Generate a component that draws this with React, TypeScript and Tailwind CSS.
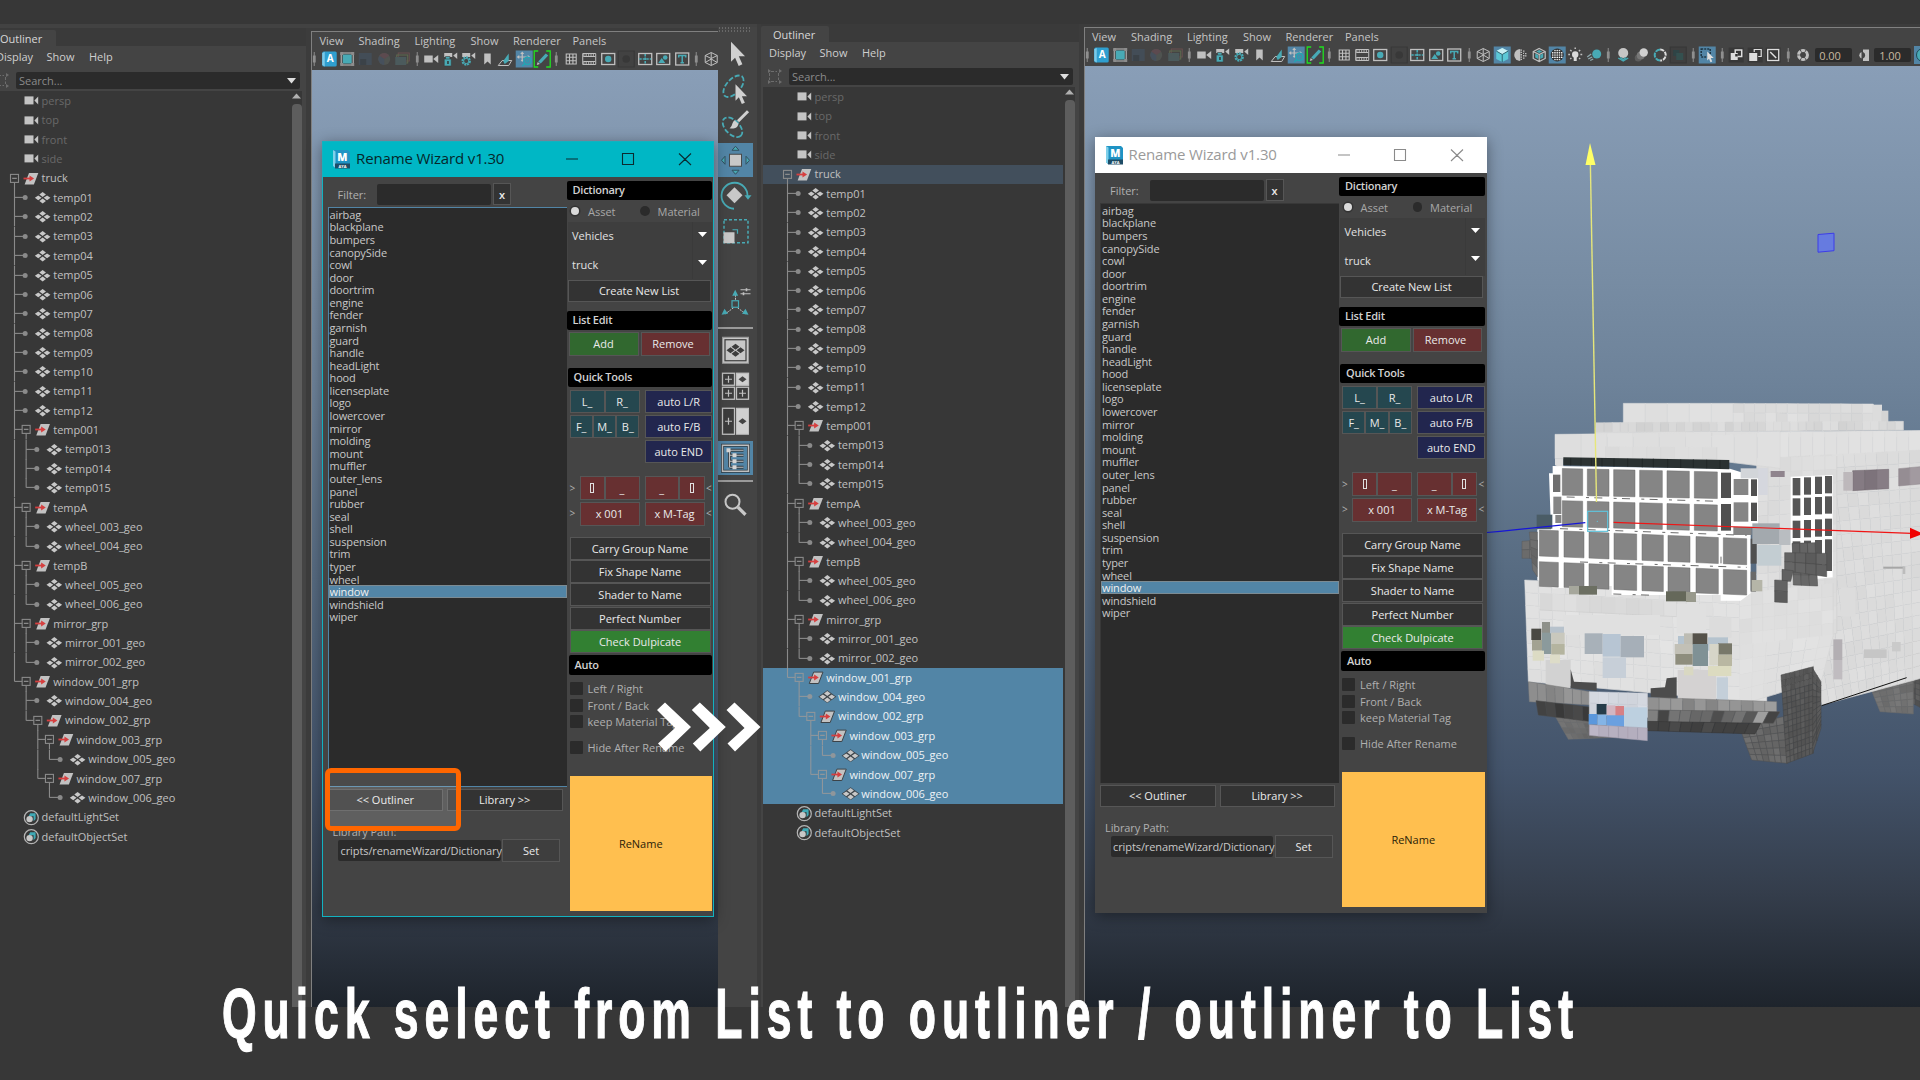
import React from "react";

/* ------------------------------------------------------------------ */
/* Outliner                                                            */
/* ------------------------------------------------------------------ */

type Kind = "cam" | "grp" | "geo" | "set";
type Row = [string, Kind, number];

const TREE: Row[] = [
  ["persp", "cam", 0],
  ["top", "cam", 0],
  ["front", "cam", 0],
  ["side", "cam", 0],
  ["truck", "grp", 0],
  ...["01", "02", "03", "04", "05", "06", "07", "08", "09", "10", "11", "12"].map(
    (n) => ["temp" + n, "geo", 1] as Row
  ),
  ["temp001", "grp", 1],
  ["temp013", "geo", 2],
  ["temp014", "geo", 2],
  ["temp015", "geo", 2],
  ["tempA", "grp", 1],
  ["wheel_003_geo", "geo", 2],
  ["wheel_004_geo", "geo", 2],
  ["tempB", "grp", 1],
  ["wheel_005_geo", "geo", 2],
  ["wheel_006_geo", "geo", 2],
  ["mirror_grp", "grp", 1],
  ["mirror_001_geo", "geo", 2],
  ["mirror_002_geo", "geo", 2],
  ["window_001_grp", "grp", 1],
  ["window_004_geo", "geo", 2],
  ["window_002_grp", "grp", 2],
  ["window_003_grp", "grp", 3],
  ["window_005_geo", "geo", 4],
  ["window_007_grp", "grp", 3],
  ["window_006_geo", "geo", 4],
  ["defaultLightSet", "set", 0],
  ["defaultObjectSet", "set", 0],
];

const STEP = 11.65;
const MID = 9.7;

/** True when a guide line of the given level goes on below row i. */
function continues(i: number, level: number) {
  for (let j = i + 1; j < TREE.length; j++) {
    if (TREE[j][2] <= level) return false;
    if (TREE[j][2] === level + 1) return true;
  }
  return false;
}

function NodeIcon({ kind, x, sel }: { kind: Kind; x: number; sel: boolean }) {
  const y = MID;
  if (kind === "cam")
    return (
      <g fill="#c4c4c4">
        <rect x={x - 6.5} y={y - 4.3} width="9" height="8" />
        <path d={`M${x + 7.2} ${y - 4.3}v8l-3.8 -4z`} />
      </g>
    );
  if (kind === "grp")
    return (
      <g>
        <path
          d={`M${x - 2} ${y - 5.6}h9.3l-4.4 11.4h-9.3z`}
          fill="#c2c2c2"
          stroke={sel ? "#3c4348" : "none"}
          strokeWidth="1"
        />
        <path d={`M${x - 7.5} ${y - 0.2}h8`} stroke="#d63f3f" strokeWidth="1.8" />
        <path d={`M${x - 1.5} ${y - 3.2}l4.6 3l-4.6 3z`} fill="#d63f3f" />
      </g>
    );
  if (kind === "geo")
    return (
      <g fill="#c8c8c8">
        {sel && <path d={`M${x - 9} ${y}l9 -6.4l9 6.4l-9 6.4z`} fill="#3c4348" />}
        <path d={`M${x} ${y - 5.6}l3.3 2.4l-3.3 2.4l-3.3 -2.4z`} />
        <path d={`M${x} ${y + 0.9}l3.3 2.4l-3.3 2.4l-3.3 -2.4z`} />
        <path d={`M${x - 4.4} ${y - 2.3}l3.4 2.4l-3.4 2.4l-3.4 -2.4z`} />
        <path d={`M${x + 4.4} ${y - 2.3}l3.4 2.4l-3.4 2.4l-3.4 -2.4z`} />
      </g>
    );
  return (
    <g>
      <circle cx={x + 0.3} cy={y} r="7" fill="none" stroke="#b4b4b4" strokeWidth="1.2" />
      <path d={`M${x - 0.8} ${y - 4.4}h5.4v5.6l-2 2.4v-5h-5z`} fill="#3fa9b5" />
      <circle cx={x - 1.4} cy={y + 1.4} r="3.2" fill="#c8c8c8" />
    </g>
  );
}

function TreeRow({ i, hot }: { i: number; hot: boolean }) {
  const [name, kind, depth] = TREE[i];
  const inSel = hot && i >= 30 && i <= 36;
  const w = 51.6 + STEP * depth;
  const line = inSel ? "#8f969b" : "#8a8a8a";
  const X = (k: number) => 24.5 + STEP * k;
  const bg = inSel ? "bg-[#5285a6]" : hot && i === 4 ? "bg-[#424f5c]" : "";
  const fg = inSel ? "text-[#eef3f6]" : kind === "cam" ? "text-[#696969]" : "text-[#c0c0c0]";
  const px = X(depth - 1);
  return (
    <div className={`flex h-[19.36px] w-[300px] shrink-0 items-center ${bg}`}>
      <svg className="shrink-0 overflow-visible" width={w} height="19.36">
        <g stroke={line} strokeWidth="1.1" fill="none">
          {Array.from({ length: Math.max(0, depth - 1) }, (_, k) =>
            continues(i, k) ? <path key={k} d={`M${X(k)} 0V19.4`} /> : null
          )}
          {depth > 0 && <path d={`M${px} 0V${continues(i, depth - 1) ? 19.4 : MID - 0.3}`} />}
          {depth > 0 && <path d={`M${px} ${MID - 0.3}H${kind === "grp" ? X(depth) - 4 : X(depth) - 2}`} />}
          {kind === "grp" && (
            <>
              <rect x={X(depth) - 4} y={MID - 4.3} width="8" height="8" />
              <path d={`M${X(depth) - 2.3} ${MID - 0.3}h4.6M${X(depth)} ${MID + 4}V19.4`} />
            </>
          )}
        </g>
        {kind === "geo" && <circle cx={X(depth) - 1} cy={MID - 0.3} r="2.5" fill={line} />}
        <NodeIcon kind={kind} x={41 + STEP * depth} sel={inSel} />
      </svg>
      <span className={`whitespace-nowrap pb-px text-[11px] leading-none ${fg}`}>{name}</span>
    </div>
  );
}

function Outliner({ hot = false }: { hot?: boolean }) {
  return (
    <div className="flex w-[318px] shrink-0 flex-col bg-[#3a3a3a]">
      <div className="flex h-[18px] items-end">
        <div className="flex h-4 w-[68px] items-center rounded-t-[2px] bg-[#444444] pl-3 text-[11px] leading-none text-[#d8d8d8]">
          Outliner
        </div>
      </div>
      <div className="flex min-h-0 flex-1 flex-col bg-[#444444]">
        <div className="flex h-[21px] items-center pb-px pl-[8px] text-[11px] leading-none text-[#cfcfcf]">
          <span className="w-[50.5px]">Display</span>
          <span className="w-[42.5px]">Show</span>
          <span>Help</span>
        </div>
        <div className="flex h-6 pl-[6px] pt-[5px]">
          <svg width="22" height="17" fill="none" stroke="#6d6d6d" strokeWidth="1">
            <path d="M4 3.5h6M4 13.5h6M2.500 5v7M11.500 5v7" strokeDasharray="3 1.500" />
            <path d="M1 1l3 2l-3 2zM1 12l3 2l-3 2zM12 1l3 2l-3 2zM12 12l3 2l-3 2z" fill="#6d6d6d" stroke="none" />
          </svg>
          <div className="flex h-[17px] w-[284px] items-center justify-between rounded-[2px] bg-[#2b2b2b] pl-[3px] pr-1 text-[11px] leading-none text-[#8a8a8a]">
            <span>Search...</span>
            <svg width="9" height="6">
              <path d="M0 0h9l-4.500 5.400z" fill="#dedede" />
            </svg>
          </div>
        </div>
        <div className="flex min-h-0 flex-1 pl-[2px]">
          <div className="flex w-[301px] flex-col bg-[#373737] pt-[0.3px]">
            {TREE.map((_, i) => (
              <TreeRow key={i} i={i} hot={hot} />
            ))}
          </div>
          <div className="flex w-[11px] flex-col items-center bg-[#373737] pt-[2px]">
            <svg width="9" height="6">
              <path d="M0 5.500h9l-4.500 -5z" fill="#b0b0b0" />
            </svg>
            <div className="mt-[5px] w-[10px] flex-1 rounded-t-[4px] bg-[#5d5d5d]" />
          </div>
        </div>
      </div>
    </div>
  );
}

/* ------------------------------------------------------------------ */
/* Viewport tool bar                                                   */
/* ------------------------------------------------------------------ */

const T = "#48aab5";
const G = "#c0c0c0";

const CUBE = "M9 2.500l6 3v7l-6 3l-6 -3v-7zM3 5.500l6 3l6 -3M9 8.500v7";

const ICONS: Record<string, React.ReactNode> = {
  a: (
    <>
      <rect x="2" y="1.500" width="14.500" height="15" rx="1.500" fill="#2f9fd0" />
      <path d="M2 3v12l2.500 1.500V2z" fill="#7cc9e8" />
      <text x="10" y="12.300" fontSize="10" fontWeight="700" fill="#fff" textAnchor="middle">A</text>
    </>
  ),
  frame: (
    <>
      <rect x="4.500" y="4.500" width="9" height="9" fill={T} />
      <path d="M3 3h12v12h-12z" fill="none" stroke={G} />
      <path d="M2 2h3v3h-3zM13 2h3v3h-3zM2 13h3v3h-3zM13 13h3v3h-3z" fill="#8d8d8d" />
    </>
  ),
  dim1: (
    <>
      <rect x="2.500" y="3" width="13" height="12" fill="#434d57" />
      <rect x="4" y="9" width="6" height="6" fill="#3b4248" />
    </>
  ),
  dim2: (
    <>
      <circle cx="9" cy="9" r="6" fill="#4f5350" />
      <path d="M9 9L4 5.800A6 6 0 0 1 14 5.800z" fill="#5c4a4f" />
      <path d="M9 9l-5 -3.200A6 6 0 0 0 9 15z" fill="#46505c" />
    </>
  ),
  dim3: (
    <>
      <rect x="5" y="3" width="11" height="8" fill="none" stroke="#6a4f4f" />
      <rect x="3.500" y="5" width="11" height="8" fill="none" stroke="#5f6a4f" />
      <rect x="2" y="7" width="11" height="8" fill="#4b5a5c" />
    </>
  ),
  cam: <path d="M2 5.500h8.500v7H2zM11 9l5 -4v8z" fill={G} />,
  camlock: (
    <>
      <path d="M3 3h8v4h-8zM12 5.500l4 -3v6.500z" fill={G} />
      <path d="M3 9h7v7h-7zM4.300 9v-2.500h4.400V9" fill={T} stroke="#3a3a3a" strokeWidth=".6" />
      <rect x="6" y="11" width="1.500" height="3" fill="#333" />
    </>
  ),
  camgear: (
    <>
      <path d="M3 3h8v4h-8zM12 5.500l4 -3v6.500z" fill={G} />
      <circle cx="7" cy="11" r="3.700" fill="#444" stroke={T} strokeWidth="2" strokeDasharray="2 .8" />
      <circle cx="7" cy="11" r="2.600" fill="none" stroke={T} />
    </>
  ),
  mark: <path d="M6 3.500h6.500v11l-3.200 -3l-3.300 3z" fill={G} />,
  plane: (
    <>
      <path d="M2 15.500l4 -5h9.500l-3 5z" fill="none" stroke={G} />
      <path d="M7 11l5.500 -7.500v7.500l-4 3z" fill={T} />
    </>
  ),
  pan: (
    <>
      <rect x=".5" y=".5" width="17" height="17" fill="#5285a6" />
      <path d="M7 3.500v7M3.500 7h8" stroke={G} strokeWidth="1.200" />
      <path d="M7 1.500l2 2.500h-4zM1.500 7l2.500 -2v4zM12.500 5l2.500 2l-2.500 1zM5.500 10h3l-1.500 2z" fill={G} />
      <circle cx="12.300" cy="10.800" r="3.600" fill="#5285a6" stroke="#23a5b3" strokeWidth="1.500" />
      <circle cx="12.300" cy="10.800" r="1.200" fill="none" stroke="#23a5b3" />
      <path d="M9.800 13.500l-2.800 2.500" stroke="#23a5b3" strokeWidth="1.600" />
    </>
  ),
  pen: (
    <>
      <path d="M5 1H1v16h4M13 1h4v16h-4" fill="none" stroke="#1fe01f" strokeWidth="1.300" />
      <path d="M12.500 3.500l2.500 2l-7.500 8l-2.500 -2z" fill={T} />
      <path d="M4.500 12l2.300 2l-3.300 1z" fill={G} />
    </>
  ),
  grid: <path d="M4 4h10v10H4zM7.300 4v10M10.700 4v10M4 7.300h10M4 10.700h10" fill="none" stroke={G} strokeWidth="1.100" />,
  film: (
    <>
      <path d="M2.500 3.500h13v11h-13zM3 6.500h12M3 11.500h12" fill="none" stroke={G} />
      <path d="M3 5h12M3 13h12" stroke={G} strokeWidth="1.600" strokeDasharray="1.200 1.200" />
    </>
  ),
  gate: (
    <>
      <rect x="2.500" y="3.500" width="13" height="11" fill="none" stroke={G} strokeWidth="1.300" />
      <circle cx="9" cy="9" r="3.200" fill={T} />
    </>
  ),
  gatedim: (
    <>
      <rect x="1" y="1" width="16" height="16" fill="#424242" stroke="#383838" />
      <circle cx="9" cy="9" r="3.800" fill="#383838" />
    </>
  ),
  cross: (
    <>
      <rect x="2.500" y="3.500" width="13" height="11" fill="none" stroke={G} strokeWidth="1.300" />
      <path d="M9 4v10M3 9h12" stroke={T} strokeWidth="1.600" strokeDasharray="2.500 1" />
    </>
  ),
  image: (
    <>
      <rect x="2.500" y="3.500" width="13" height="11" fill="none" stroke={G} strokeWidth="1.300" />
      <path d="M4 13l3.500 -5l3.500 5z" fill={T} />
      <circle cx="11" cy="7.500" r="2.300" fill={T} />
    </>
  ),
  text: (
    <>
      <rect x="2.500" y="3" width="13" height="12" fill="none" stroke={G} strokeWidth="1.300" />
      <path d="M5.500 7.500v-2h7v2M9 5.500v7M7.300 12.700h3.400" fill="none" stroke={T} strokeWidth="1.500" />
    </>
  ),
  cube: <path d={CUBE + "M3 12.500l6 -3.500l6 3.500M9 2.500v6"} fill="none" stroke={G} strokeWidth="1" />,
  cubefill: (
    <>
      <rect x=".5" y=".5" width="17" height="17" fill="#5285a6" />
      <path d="M9 2l6 3v8l-6 3l-6 -3V5z" fill="#5cc8d6" />
      <path d="M3 5l6 -3l6 3l-6 3.500z" fill="#c9eef2" />
      <path d="M3 5l6 3.500l6 -3.500M9 8.500V16" fill="none" stroke="#2f6673" />
    </>
  ),
  half: (
    <>
      <path d="M9 3a6 6 0 0 0 0 12z" fill={G} />
      <path d="M10 3.500v11M12.500 4.500v9M14.500 7v4" stroke={G} strokeWidth="1.500" strokeDasharray="1.300 1" />
    </>
  ),
  cubein: (
    <>
      <path d={CUBE} fill="none" stroke={G} strokeWidth="1.200" />
      <path d="M5 7.500l3 1.500v4l-3 -1.500zM10 9l3 -1.500v4l-3 1.500zM6 5.500l3 -1.500l3 1.500l-3 1.500z" fill={T} />
    </>
  ),
  dots: (
    <>
      <rect x=".5" y=".5" width="17" height="17" fill="#5285a6" />
      <circle cx="9" cy="9" r="6.500" fill="#2e2e2e" />
      {[4.500, 6.750, 9, 11.250, 13.500].map((y, j) =>
        [4.500, 6.750, 9, 11.250, 13.500].map((x) =>
          Math.hypot(x - 9, y - 9) < 6 ? <circle key={`${x}${y}`} cx={x} cy={y} r=".85" fill={j % 2 ? "#ffffff" : "#dedede"} /> : null
        )
      )}
    </>
  ),
  bulb: (
    <>
      <circle cx="9" cy="8.500" r="3.200" fill="#dcdcdc" />
      <path d="M7.500 11h3v4h-3z" fill="#dcdcdc" />
      <path d="M9 1.500v1.500M2 8.500h1.800M14.200 8.500H16M4 4l1.400 1.200M14 4l-1.400 1.200M4 13l1.200 -1M14 13l-1.200 -1" stroke={G} strokeWidth="1.500" />
    </>
  ),
  comet: (
    <>
      <circle cx="11.500" cy="8" r="4.500" fill={T} />
      <path d="M2 11l4 -3M3 13l4 -2M5 14.500l3 -1.500" stroke="#8fa9ad" strokeWidth="1.300" />
    </>
  ),
  ball: (
    <>
      <circle cx="9" cy="7" r="5" fill="#c6c6c6" />
      <path d="M4 12l5 3l5 -3M6 11.500l3 2l3 -2" fill="none" stroke={T} strokeWidth="1.300" />
    </>
  ),
  motion: (
    <>
      <circle cx="6" cy="12" r="3.500" fill="#5d5d5d" />
      <circle cx="8.500" cy="9.500" r="4" fill="#777" />
      <circle cx="11.500" cy="6.500" r="4.200" fill="#cfcfcf" />
    </>
  ),
  ring: (
    <>
      <path d="M9 3.500a5.500 5.500 0 0 0 0 11" fill="none" stroke={T} strokeWidth="2" strokeDasharray="5 1" />
      <path d="M9 3.500a5.500 5.500 0 0 1 0 11" fill="none" stroke="#ddd" strokeWidth="2" strokeDasharray="4 1" />
    </>
  ),
  sqdim: (
    <>
      <rect x="1" y="1" width="16" height="16" fill="#3f3f3f" stroke="#373737" />
      <rect x="4" y="4" width="6" height="6" fill="#2f4446" />
      <rect x="7" y="7" width="7" height="7" fill="#34504f" />
    </>
  ),
  pick: (
    <>
      <rect x=".5" y=".5" width="17" height="17" fill="#5285a6" />
      <rect x="3" y="3" width="9" height="8" fill="none" stroke="#1f3644" strokeWidth="1.500" strokeDasharray="2 1" />
      <path d="M9 5.500l6.500 6.500h-3l1.500 3.500l-1.700 .7l-1.500 -3.500l-1.800 1.800z" fill="#dedede" />
    </>
  ),
  ov1: (
    <>
      <rect x="1.500" y="1.500" width="15" height="15" fill="#383838" />
      <rect x="3.500" y="7" width="7" height="7" fill="#dedede" />
      <path d="M8 4h6.500v6.500H8z" fill="none" stroke="#dedede" strokeWidth="1.500" />
      <rect x="8" y="8" width="2.500" height="2.500" fill="#333" />
    </>
  ),
  ov2: (
    <>
      <rect x="1.500" y="1.500" width="15" height="15" fill="#383838" />
      <rect x="3" y="7" width="8" height="8" fill="#dedede" />
      <path d="M8 6V3.500h7v7h-3" fill="none" stroke="#dedede" strokeWidth="1.200" />
    </>
  ),
  ov3: (
    <>
      <rect x="1.500" y="1.500" width="15" height="15" fill="#383838" />
      <rect x="3.500" y="3.500" width="11" height="11" fill="none" stroke="#dedede" strokeWidth="1.300" />
      <path d="M6 6l6 6" stroke="#dedede" strokeWidth="1.500" />
    </>
  ),
};

function Icon({ n }: { n: string }) {
  return (
    <svg className="w-[18.45px] shrink-0" height="18" viewBox="0 0 18 18">
      {ICONS[n]}
    </svg>
  );
}

function Sep() {
  return (
    <svg className="w-[10.6px] shrink-0" height="18" viewBox="0 0 10.600 18">
      <path d="M5.300 2v14M5.300 6v6" stroke="#7d7d7d" strokeWidth="1.300" />
      <path d="M5.300 5.500v7" stroke="#8f8f8f" strokeWidth="2.800" />
    </svg>
  );
}

function ViewBar({ wide }: { wide: boolean }) {
  const render = (list: string[]) =>
    list.map((n, i) => (n === "|" ? <Sep key={i} /> : <Icon key={i} n={n} />));
  const base = ["|", "a", "frame", "dim1", "dim2", "dim3", "|", "cam", "camlock", "camgear", "mark", "plane", "pan", "pen", "|", "grid", "film", "gate", "gatedim", "cross", "image", "text", "|", "cube"];
  const more = ["cubefill", "half", "cubein", "dots", "bulb", "comet", "|", "ball", "motion", "ring", "sqdim", "|", "pick", "|", "ov1", "ov2", "ov3", "|"];
  return (
    <div className="flex h-[38px] shrink-0 flex-col bg-[#444444] text-[11px] leading-none text-[#c6c6c6]">
      <div className="flex h-[18px] items-center pb-px pl-[7.5px]">
        <span className="w-[39px]">View</span>
        <span className="w-[56px]">Shading</span>
        <span className="w-[56px]">Lighting</span>
        <span className="w-[42.5px]">Show</span>
        <span className="w-[59.500px]">Renderer</span>
        <span>Panels</span>
      </div>
      <div className="-ml-[3px] flex h-[18px] items-center">
        {render(base)}
        {wide && (
          <>
            {render(more)}
            <svg className="ml-[2px] shrink-0" width="16" height="18" viewBox="0 0 16 18">
              <circle cx="8" cy="9" r="4.500" fill="none" stroke={G} strokeWidth="3" strokeDasharray="4 .7" />
            </svg>
            <div className="ml-[4px] flex h-[14px] w-[36.500px] shrink-0 items-center rounded-[2px] bg-[#2b2b2b] pl-1 text-[#c8b9a0]">0.00</div>
            <svg className="ml-[5px] shrink-0" width="14" height="18" viewBox="0 0 14 18">
              <path d="M6 3.500h6v11.500h-6v-2.500a3.500 3.500 0 0 0 0 -6.500z" fill={G} />
              <path d="M4.500 6a3.500 3.500 0 0 0 0 6.500z" fill={G} />
            </svg>
            <div className="ml-[3.500px] flex h-[14px] w-[36.500px] shrink-0 items-center rounded-[2px] bg-[#2b2b2b] pl-[5px] text-[#c8b9a0]">1.00</div>
            <svg className="ml-[3px] shrink-0" width="18" height="18" viewBox="0 0 18 18">
              <rect width="18" height="18" fill="#5285a6" />
              <circle cx="9" cy="9" r="6.500" fill={T} stroke="#1d4a55" />
            </svg>
          </>
        )}
      </div>
    </div>
  );
}

/* ------------------------------------------------------------------ */
/* Tool box                                                            */
/* ------------------------------------------------------------------ */

const ARROW = "M0 0l14 14.500h-6.200l3.600 8l-3.700 1.700l-3.600 -8.200l-4.100 4z";

function Tool({ h, on = false, children }: { h: number; on?: boolean; children?: React.ReactNode }) {
  return (
    <div className="flex w-[35px] shrink-0 items-center" style={{ height: h }}>
      <svg
        width="35"
        height="34.500"
        viewBox="-17.500 -17.250 35 34.500"
        className={on ? "bg-[#5285a6]" : ""}
        fill="none"
      >
        {children}
      </svg>
    </div>
  );
}

function ToolBox() {
  const four = (x: number, y: number, lit: boolean) => (
    <g key={`${x}${y}`}>
      <rect x={x} y={y} width="12" height="12" fill={lit ? "#d0d0d0" : "#3c3c3c"} stroke={G} strokeWidth="1.300" />
      {lit ? (
        <path d={`M${x + 2} ${y + 6}l4 -3l4 3l-4 3z`} fill="#444" />
      ) : (
        <path d={`M${x + 6} ${y + 2.5}v7M${x + 2.500} ${y + 6}h7`} stroke={G} strokeWidth="1.200" />
      )}
    </g>
  );
  return (
    <div className="flex w-[39px] shrink-0 flex-col bg-[#444444]">
      <svg width="35" height="8" className="shrink-0">
        <path d="M1 1h33M1 4h33" stroke="#8b8b8b" strokeDasharray="1 2" />
      </svg>
      <Tool h={36}>
        <path transform="translate(-4.500 -11.500)" d={ARROW} fill="#d0d0d0" />
      </Tool>
      <Tool h={35.500}>
        <ellipse cx="-2" cy="-3" rx="13" ry="7" transform="rotate(-48 -2 -3)" stroke={T} strokeWidth="1.800" strokeDasharray="5 2" />
        <path transform="translate(0 -5) scale(.82)" d={ARROW} fill="#d0d0d0" />
      </Tool>
      <Tool h={35.500}>
        <ellipse cx="-3" cy="3" rx="12" ry="7" transform="rotate(45 -3 3)" stroke={T} strokeWidth="1.800" strokeDasharray="5 2" />
        <path d="M12.500 -13l-10 10" stroke="#d0d0d0" strokeWidth="3" />
        <path d="M-1 -4l4 3.500c-1 5 -5 5 -9 4.500c3 -2 2 -5 5 -8z" fill="#d0d0d0" />
      </Tool>
      <Tool h={35.500} on>
        <rect x="-6" y="-6" width="12" height="12" fill="#c8c8c8" stroke="#4a4a4a" />
        <path d="M0 -14l3.500 4h-7zM0 14l3.500 -4h-7zM-14 0l3.500 -4v8zM14 0l-3.500 -4v8z" fill={T} stroke="#33505f" />
      </Tool>
      <Tool h={35.500}>
        <path d="M-1.500 13.500A13 13 0 1 1 12 1" stroke={T} strokeWidth="1.800" />
        <path d="M9 0h7l-3.500 4.500z" fill={T} />
        <path d="M-1 -8l8 8l-8 8l-8 -8z" fill="#c8c8c8" />
      </Tool>
      <Tool h={36}>
        <rect x="-11.500" y="-11.500" width="24" height="23" stroke={T} strokeWidth="1.500" strokeDasharray="3 2" />
        <rect x="-12" y="1" width="11" height="11" fill="#c8c8c8" />
        <path d="M-3 -1.500h5v4" stroke={T} strokeWidth="1.200" />
      </Tool>
      <Tool h={37.500} />
      <Tool h={36}>
        <g transform="translate(0 -.5)">
          <path d="M0 -4v-7M-2 4l-8 6M2 4l8 6" stroke={G} strokeDasharray="2 1" />
          <rect x="-3.500" y="-3" width="6.500" height="6.500" stroke={T} strokeWidth="1.200" />
          <path d="M-.3 -14l3 6h-6zM-14 11l3 -6l3.500 5zM13 11l-3 -6l-3.500 5z" fill={T} />
          <path d="M5 -14h10M5 -10h10" stroke={G} />
          <path d="M11 -15.500v3M8 -11.500v3" stroke={G} strokeWidth="1.600" />
        </g>
      </Tool>
      <div className="mt-[4px] h-[2px] w-[35px] shrink-0 bg-[#9a9a9a]" />
      <div className="h-[4px] shrink-0" />
      <Tool h={35.500}>
        <rect x="-13" y="-13" width="26" height="26" fill="#c8c8c8" stroke="#9a9a9a" />
        <rect x="-10.500" y="-10.500" width="21" height="21" stroke="#3c3c3c" strokeWidth="1.200" />
        <path d="M0 -6.500l4 3l-4 3l-4 -3zM0 .5l4 3l-4 3l-4 -3zM-5 -3l4 3l-4 3l-4 -3zM5 -3l4 3l-4 3l-4 -3z" fill="#3c3c3c" />
      </Tool>
      <Tool h={35.500}>
        {four(-13, -13, false)}
        {four(1, -13, true)}
        {four(-13, 1, false)}
        {four(1, 1, false)}
      </Tool>
      <Tool h={36}>
        <rect x="-13" y="-13" width="12" height="26" fill="#3c3c3c" stroke={G} strokeWidth="1.300" />
        <rect x="1" y="-13" width="12" height="26" fill="#d0d0d0" stroke={G} />
        <path d="M-7 -3.500v7M-10.500 0h7" stroke={G} strokeWidth="1.200" />
        <path d="M3 0l4 -3l4 3l-4 3z" fill="#444" />
      </Tool>
      <Tool h={36.500} on>
        <rect x="-13" y="-13" width="26" height="26" stroke="#2f3b43" strokeWidth="3" />
        <rect x="-13" y="-13" width="26" height="26" stroke={G} strokeWidth="1.500" />
        <path d="M-6 -8v17M-6 -8h14M-6 -3h14M-6 3h14M-6 9h14" stroke="#2f3b43" strokeWidth="3" />
        <path d="M-6 -8v17M-6 -8h14M-6 -3h14M-6 3h14M-6 9h14" stroke={G} strokeWidth="1.200" />
        <path d="M-9 -10h4v4h-4zM-3 -5h4v4h-4zM-3 1h4v4h-4zM-3 7h4v4h-4z" fill="#d6d6d6" />
      </Tool>
      <div className="mt-[4px] h-[2px] w-[35px] shrink-0 bg-[#9a9a9a]" />
      <div className="h-[4px] shrink-0" />
      <Tool h={36}>
        <circle cx="-3" cy="-2.500" r="7" stroke="#c8c8c8" strokeWidth="2" />
        <path d="M2.500 3l7.500 7.500" stroke="#c8c8c8" strokeWidth="3.200" />
      </Tool>
    </div>
  );
}

/* ------------------------------------------------------------------ */
/* Rename Wizard window                                                */
/* ------------------------------------------------------------------ */

const WORDS = [
  "airbag", "blackplane", "bumpers", "canopySide", "cowl", "door", "doortrim", "engine",
  "fender", "garnish", "guard", "handle", "headLight", "hood", "licenseplate", "logo",
  "lowercover", "mirror", "molding", "mount", "muffler", "outer_lens", "panel", "rubber",
  "seal", "shell", "suspension", "trim", "typer", "wheel", "window", "windshield", "wiper",
];

function Btn({ className, children }: { className: string; children: React.ReactNode }) {
  return (
    <div
      className={`flex shrink-0 items-center justify-center whitespace-nowrap border border-[#565656] leading-none text-[#eaeaea] ${className}`}
    >
      {children}
    </div>
  );
}

function Head({ className = "", children }: { className?: string; children: React.ReactNode }) {
  return (
    <div className={`flex h-[19.500px] shrink-0 items-center rounded-[2px] bg-black pb-px pl-[6px] font-semibold leading-none tracking-[-0.25px] text-[#d2d2d2] ${className}`}>
      {children}
    </div>
  );
}

function Select({ children }: { children: string }) {
  return (
    <div className="flex h-[28.500px] items-center bg-[#3e3e3e] pl-[4.500px] font-medium leading-none text-[#e2e2e2]">
      <span className="flex-1">{children}</span>
      <div className="flex h-full w-[20px] items-center justify-center border-l border-[#3a3a3a] pb-[3px]">
        <svg width="9" height="5">
          <path d="M0 0h9l-4.500 5z" fill="#fff" />
        </svg>
      </div>
    </div>
  );
}

function Check({ className = "", children }: { className?: string; children: string }) {
  return (
    <div className={`flex h-[16.500px] items-center leading-none text-[#b0b0b0] ${className}`}>
      <div className="mr-[5px] h-[13px] w-[13px] rounded-[1px] bg-[#2b2b2b]" />
      {children}
    </div>
  );
}

function RenameWizard({ active }: { active: boolean }) {
  const ink = active ? "#0b2b30" : "#8a8a8a";
  return (
    <div
      className={`absolute top-[108.500px] left-[10px] flex h-[776.500px] w-[392px] flex-col bg-[#444444] text-[11px] shadow-[0_3px_14px_rgba(0,0,0,0.4)] ${
        active ? "outline-1 -outline-offset-1 outline-[#12b2c0]" : ""
      }`}
    >
      <div className={`flex h-[36.500px] shrink-0 items-center ${active ? "bg-[#00b7c5]" : "bg-white"}`}>
        <svg className="ml-[10px] shrink-0" width="18" height="20" viewBox="0 0 18 20">
          <path d="M1 1h15l2 2v16H3l-2 -2z" fill="#1f93c4" />
          <path d="M1 1l2.500 1.500V19L1 17z" fill="#7fd0ea" />
          <rect x="3" y="14.500" width="15" height="5" fill="#1e4c66" />
          <text x="10.300" y="11.500" fontSize="10.500" fontWeight="800" fill="#fff" textAnchor="middle">M</text>
          <text x="10.500" y="18.500" fontSize="4" fontWeight="700" fill="#fff" textAnchor="middle">AYA</text>
        </svg>
        <span
          className={`ml-[6px] w-[209.500px] whitespace-nowrap pb-px text-[15px] leading-none tracking-[-0.130px] ${
            active ? "text-[#06272b]" : "text-[#9a9a9a]"
          }`}
        >
          Rename Wizard v1.30
        </span>
        <svg width="126" height="14" fill="none" stroke={ink} strokeWidth="1.100">
          <path d="M0 7h12M56.500 1.500h11v11h-11zM113 1.500l12 11.500M125 1.500l-12 11.500" />
        </svg>
      </div>
      <div className="flex min-h-0 flex-1">
        <div className="flex w-[244.500px] shrink-0 flex-col">
          <div className="mt-[6px] flex h-[22px] shrink-0 items-center">
            <span className="w-[55px] pl-[15.500px] leading-none text-[#b0b0b0]">Filter:</span>
            <div className="h-[21px] w-[114px] rounded-[2px] bg-[#2b2b2b]" />
            <Btn className="ml-[2px] h-[22px] w-[18px] bg-[#333333] font-semibold">x</Btn>
          </div>
          <div
            className={`mt-[2px] ml-[5.500px] flex h-[580px] shrink-0 flex-col overflow-hidden border-t border-l bg-[#2b2b2b] ${
              active ? "border-b border-[#5285a6]" : "border-[#383838]"
            }`}
          >
            {WORDS.map((w) => (
              <div
                key={w}
                className={`flex h-[12.580px] shrink-0 items-center pl-px leading-none tracking-[-0.120px] ${
                  w === "window"
                    ? "bg-[#5285a6] text-[#f0f0f0] outline-1 -outline-offset-1 outline-[#7c8b93]"
                    : "text-[#c8c8c8]"
                }`}
              >
                {w}
              </div>
            ))}
          </div>
          <div className="mt-[1.500px] flex gap-[4px] pl-[5.500px]">
            <Btn className="h-[22.500px] w-[115.500px] bg-[#333333]">&lt;&lt; Outliner</Btn>
            <Btn className="h-[22.500px] w-[115.500px] bg-[#333333]">Library &gt;&gt;</Btn>
          </div>
          <div className="mt-[13px] flex h-[15px] items-center pl-[10.500px] leading-none tracking-[-0.100px] text-[#b0b0b0]">Library Path:</div>
          <div className="flex items-center gap-[1.500px] pl-4">
            <div className="flex h-[21px] w-[162.500px] items-center rounded-[2px] bg-[#2b2b2b] pb-px pl-[2.500px] leading-none tracking-[-0.090px] text-[#c8c8c8]">
              cripts/renameWizard/Dictionary
            </div>
            <Btn className="h-[23px] w-[58px] bg-[#3e3e3e]">Set</Btn>
          </div>
        </div>
        <div className="flex w-[145.500px] shrink-0 flex-col pt-[3.500px]">
          <Head>Dictionary</Head>
          <div className="flex h-[21.500px] items-center leading-none text-[#a8a8a8]">
            <div className="ml-[4.500px] h-[8px] w-[8px] rounded-full bg-[#dadada] shadow-[0_0_0_1.500px_#333]" />
            <span className="ml-[9px] w-[52px] pt-px">Asset</span>
            <div className="h-[9.500px] w-[9.500px] rounded-full bg-[#2b2b2b]" />
            <span className="ml-[8px] pt-px">Material</span>
          </div>
          <div className="ml-[1px] flex flex-col bg-[#3e3e3e] pb-[1px]">
            <Select>Vehicles</Select>
            <Select>truck</Select>
          </div>
          <Btn className="ml-[1px] h-[22.500px] w-[143px] bg-[#333333]">Create New List</Btn>
          <Head className="mt-[8.500px]">List Edit</Head>
          <div className="mt-[2px] ml-[2px] flex gap-[2px]">
            <Btn className="h-[23.500px] w-[70px] bg-[#31682f]">Add</Btn>
            <Btn className="h-[23.500px] w-[69px] bg-[#673031] pr-1">Remove</Btn>
          </div>
          <Head className="mt-[12px] ml-[1px]">Quick Tools</Head>
          <div className="mt-[2.500px] ml-[3px] flex justify-between">
            <div className="flex flex-col gap-[2px]">
              <div className="flex">
                <Btn className="h-[23.300px] w-[35px] bg-[#25474f]">L_</Btn>
                <Btn className="h-[23.300px] w-[35px] bg-[#25474f]">R_</Btn>
              </div>
              <div className="flex">
                <Btn className="h-[23.300px] w-[23.300px] bg-[#25474f]">F_</Btn>
                <Btn className="h-[23.300px] w-[23.400px] bg-[#25474f]">M_</Btn>
                <Btn className="h-[23.300px] w-[23.300px] bg-[#25474f]">B_</Btn>
              </div>
            </div>
            <div className="flex flex-col gap-[2px]">
              <Btn className="h-[23.300px] w-[67.500px] border-[#3a3d5c] bg-[#22264e] pl-px">auto L/R</Btn>
              <Btn className="h-[23.300px] w-[67.500px] border-[#3a3d5c] bg-[#22264e] pl-px">auto F/B</Btn>
              <Btn className="h-[23.300px] w-[67.500px] border-[#3a3d5c] bg-[#22264e] pl-px">auto END</Btn>
            </div>
          </div>
          {[0, 1].map((r) => (
            <div key={r} className={`${r ? "mt-[1.500px]" : "mt-[13px]"} ml-[3px] flex h-[24px] items-center text-[10px] text-[#b0b0b0]`}>
              <span className="w-[10px]">&gt;</span>
              {r === 0 ? (
                <>
                  <Btn className="h-[24px] w-[25px] bg-[#673031] text-[11px]">
                    <i className="block h-[10px] w-[4px] border border-[#e0e0e0]" />
                  </Btn>
                  <Btn className="h-[24px] w-[35px] bg-[#673031] text-[11px]">_</Btn>
                  <Btn className="ml-[5px] h-[24px] w-[34.500px] bg-[#673031] text-[11px]">_</Btn>
                  <Btn className="h-[24px] w-[25.500px] bg-[#673031] text-[11px]">
                    <i className="block h-[10px] w-[4px] border border-[#e0e0e0]" />
                  </Btn>
                </>
              ) : (
                <>
                  <Btn className="h-[23.500px] w-[60px] bg-[#673031] text-[11px]">x 001</Btn>
                  <Btn className="ml-[5px] h-[23.500px] w-[60px] bg-[#673031] text-[11px]">x M-Tag</Btn>
                </>
              )}
              <span className="pl-[1.500px]">&lt;</span>
            </div>
          ))}
          <div className="mt-[11px] ml-[3px] flex flex-col gap-[0.500px]">
            {["Carry Group Name", "Fix Shape Name", "Shader to Name", "Perfect Number"].map((t) => (
              <Btn key={t} className="h-[22.800px] w-[141px] bg-[#333333]">{t}</Btn>
            ))}
            <Btn className="h-[23px] w-[141px] bg-[#328032]">Check Dulpicate</Btn>
          </div>
          <Head className="mt-[2px] ml-[2px]">Auto</Head>
          <div className="mt-[6px] ml-[3px] flex flex-col whitespace-nowrap">
            <Check>Left / Right</Check>
            <Check>Front / Back</Check>
            <Check>keep Material Tag</Check>
            <Check className="mt-[9.500px]">Hide After Rename</Check>
          </div>
          <div className="mt-[19.500px] ml-[3px] flex h-[135px] items-center justify-center bg-[#ffbf4f] leading-none text-[#2b1d08]">
            ReName
          </div>
        </div>
      </div>
    </div>
  );
}

/* ------------------------------------------------------------------ */
/* Voxel truck                                                         */
/* ------------------------------------------------------------------ */

type P = [number, number];

function rnd(n: number) {
  const s = Math.sin(n * 127.1 + 311.7) * 43758.5453;
  return s - Math.floor(s);
}

/** Fills a quad (tl, tr, br, bl) with nu x nv cells of slightly varying grey. */
function Cells({ q, nu, nv, base, vary = 8, edge = "#c9c9c9", sw = 1.5, seed = 1, tint = [0, 0, 0] }: {
  q: [P, P, P, P];
  nu: number;
  nv: number;
  base: number;
  vary?: number;
  edge?: string;
  sw?: number;
  seed?: number;
  tint?: [number, number, number];
}) {
  const at = (u: number, v: number): P => [0, 1].map(
    (k) => (q[0][k] * (1 - u) + q[1][k] * u) * (1 - v) + (q[3][k] * (1 - u) + q[2][k] * u) * v
  ) as P;
  const light = base > 210;
  const out = [];
  for (let i = 0; i < nu; i++)
    for (let j = 0; j < nv; j++) {
      const c = Math.round(base + (light ? 2 : 0) + (rnd(seed * 97 + i * 13 + j * 29) - 0.5) * 2 * vary);
      const pts = [at(i / nu, j / nv), at((i + 1) / nu, j / nv), at((i + 1) / nu, (j + 1) / nv), at(i / nu, (j + 1) / nv)];
      const fill = `rgb(${c + tint[0]},${c + tint[1]},${c + tint[2]})`;
      out.push(
        <polygon
          key={`${i}-${j}`}
          points={pts.map((p) => p.map((v) => v.toFixed(1)).join(",")).join(" ")}
          fill={fill}
          stroke={light ? fill : edge}
          strokeWidth={sw}
        />
      );
      if (light)
        out.push(
          <path
            key={`e${i}-${j}`}
            d={`M${pts[1].join(" ")}L${pts[2].join(" ")}L${pts[3].join(" ")}`}
            fill="none"
            stroke={edge}
            strokeOpacity={0.75}
            strokeWidth={1.8}
          />
        );
    }
  return <>{out}</>;
}

const R = ({ d }: { d: [number, number, number, number, string][] }) => (
  <>
    {d.map(([x, y, w, h, f], i) => (
      <rect key={i} x={x} y={y} width={w} height={h} fill={f} />
    ))}
  </>
);

const COLS_UP: P[] = [[187, 248], [262, 327], [341, 405], [419, 487], [501, 568], [583, 652]];
const COLS_DN: P[] = [[118, 175], [192, 252], [267, 327], [342, 410], [426, 490], [504, 570], [588, 655], [670, 740]];

function Pane({ c, top, h, skew }: { c: P; top: number; h: number; skew: number }) {
  const y0 = top + (c[0] - 118) * skew;
  const y1 = top + (c[1] - 118) * skew;
  return <path d={`M${c[0]} ${y0}L${c[1]} ${y1}V${y1 + h}L${c[0]} ${y0 + h}z`} fill="#858585" stroke="#6c6c6c" strokeWidth="1.500" />;
}

function Truck() {
  return (
    <g transform="translate(1500 380) scale(0.33333)">
      {/* rear wheel and left front wheel */}
      <Cells q={[[1218, 775], [1275, 750], [1275, 990], [1218, 960]]} nu={4} nv={13} base={88} edge="#4c4c4c" seed={3} />
      <Cells q={[[1112, 925], [1240, 890], [1240, 1002], [1140, 995]]} nu={6} nv={5} base={112} edge="#6a6a6a" seed={4} />
      <Cells q={[[165, 1008], [345, 1020], [345, 1072], [205, 1078]]} nu={9} nv={4} base={108} edge="#707070" seed={5} />

      {/* roof */}
      <Cells q={[[370, 70], [700, 70], [700, 130], [370, 130]]} nu={5} nv={1} base={222} vary={3} edge="#d0d0d0" seed={6} />
      <Cells q={[[700, 70], [1120, 72], [1120, 128], [700, 128]]} nu={13} nv={2} base={218} vary={5} edge="#cdcdcd" seed={7} />
      <R d={[[1118, 74, 28, 54, "#dcdcdc"], [1144, 92, 21, 36, "#d4d4d4"]]} />
      <Cells q={[[288, 128], [1210, 124], [1210, 150], [288, 158]]} nu={38} nv={1} base={214} vary={7} edge="#c6c6c6" seed={8} />
      <Cells q={[[288, 157], [1262, 152], [1262, 170], [288, 170]]} nu={10} nv={1} base={220} vary={2} edge="#d8d8d8" seed={9} />

      {/* side */}
      <Cells q={[[830, 160], [1262, 152], [1262, 215], [830, 235]]} nu={12} nv={1} base={223} vary={2} edge="#cfcfcf" seed={10} />
      <Cells q={[[830, 232], [1262, 210], [1262, 895], [965, 975]]} nu={13} nv={18} base={218} vary={3} edge="#cdcdcd" sw={1.2} seed={11} />
      <Cells q={[[770, 235], [1010, 228], [1010, 760], [770, 800]]} nu={7} nv={13} base={219} vary={3} edge="#cecece" seed={12} />
      <path d="M965 977L1220 893" stroke="#111" strokeWidth="3" />
      <Cells q={[[1058, 272], [1166, 268], [1166, 326], [1058, 332]]} nu={3} nv={1} base={126} vary={6} edge="#6d646c" tint={[4, -6, 2]} seed={13} />
      <Cells q={[[1196, 266], [1262, 260], [1262, 312], [1196, 318]]} nu={2} nv={1} base={152} vary={9} edge="#8d868b" tint={[2, -6, 0]} seed={14} />
      <R d={[[1030, 276, 28, 56, "#bdb8bb"], [1000, 778, 27, 62, "#b3afb3"], [1000, 840, 27, 58, "#c0bcc0"], [1092, 808, 68, 26, "#c6c6c6"], [1176, 786, 26, 28, "#cacaca"], [1150, 560, 64, 6, "#a6a6a6"], [1208, 560, 8, 22, "#bcbcbc"], [1022, 622, 45, 88, "#dcdcdc"]]} />

      {/* upper front */}
      <Cells q={[[165, 163], [635, 158], [635, 240], [165, 236]]} nu={6} nv={1} base={222} vary={3} edge="#cfcfcf" seed={15} />
      <Cells q={[[635, 168], [840, 155], [840, 265], [635, 240]]} nu={3} nv={1} base={222} vary={2} edge="#d2d2d2" seed={16} />
      <Cells q={[[275, 200], [650, 202], [650, 238], [275, 236]]} nu={9} nv={1} base={219} vary={3} edge="#cecece" seed={17} />
      <path d="M165 236h25v30l-25 -10z" fill="#dcdcdc" />

      {/* lower front */}
      <Cells q={[[74, 600], [800, 635], [800, 970], [85, 905]]} nu={18} nv={8} base={223} vary={3} edge="#cfcfcf" seed={18} />
      <Cells q={[[720, 640], [1000, 610], [1000, 770], [720, 800]]} nu={8} nv={4} base={221} vary={3} edge="#cfcfcf" seed={19} />
      <Cells q={[[720, 795], [1000, 765], [965, 900], [720, 975]]} nu={7} nv={4} base={222} vary={3} edge="#d1d1d1" seed={20} />
      <Cells q={[[120, 640], [530, 665], [530, 710], [120, 690]]} nu={11} nv={1} base={216} vary={6} edge="#c8c8c8" seed={21} />
      <R d={[[190, 705, 290, 60, "#e0e0e0"], [530, 672, 88, 88, "#e0e0e0"], [628, 712, 66, 62, "#dcdcdc"], [137, 840, 75, 84, "#d2d2d2"], [533, 870, 115, 92, "#d4d2d2"]]} />

      {/* windscreen */}
      <path d="M158 258L690 266L772 292V430L752 440V640L722 662H662V645L335 645V618L160 625L112 600V448H158z" fill="#ffffff" />
      <path d="M147 280h40v170h-34zM700 290h74v150h-74z" fill="#ffffff" />
      {COLS_UP.map((c, i) => (
        <React.Fragment key={i}>
          <Pane c={c} top={264} h={80} skew={0.022} />
          <Pane c={c} top={360} h={78} skew={0.028} />
        </React.Fragment>
      ))}
      {COLS_DN.map((c, i) => (
        <React.Fragment key={i}>
          <Pane c={c} top={450} h={78} skew={0.042} />
          <Pane c={c} top={545} h={74} skew={0.042} />
        </React.Fragment>
      ))}
      <R d={[[159, 284, 22, 52, "#6f6f6f"], [160, 350, 24, 52, "#858585"], [166, 405, 18, 24, "#858585"], [663, 278, 30, 76, "#505050"], [663, 372, 30, 80, "#505050"], [701, 297, 44, 48, "#858585"], [753, 298, 18, 50, "#505050"], [701, 367, 44, 58, "#858585"], [753, 368, 18, 55, "#505050"], [700, 440, 55, 25, "#858585"], [752, 476, 18, 75, "#505050"], [752, 575, 16, 60, "#6a6a6a"]]} />
      <path d="M200 351L660 364M180 446L740 466M240 546L740 562M340 642L465 646M663 530v20" stroke="#6a6a6a" strokeWidth="3" strokeDasharray="24 34 9 16" />
      <path d="M190 232L688 240V268L190 256z" fill="#2b3232" />
      <path d="M212 234v22M243 234v24M274 234v24M306 235v24M342 236v24M383 236v24M427 236v26M460 236v26M503 237v26M542 238v26M580 238v26M620 239v26M660 240v26" stroke="#1c2222" strokeWidth="2" />

      {/* pillar and side window */}
      <R d={[[722, 265, 80, 30, "#d2d5d9"], [775, 265, 28, 80, "#d5d7de"], [812, 273, 42, 18, "#8f848d"], [757, 430, 82, 62, "#a3a9ae"], [772, 495, 72, 62, "#c3cdd2"], [838, 450, 34, 45, "#b9bdc1"], [755, 600, 32, 34, "#b5b5a8"]]} />
      <path d="M872 290L998 285V592L940 598L872 520z" fill="#fff" />
      {[878, 912, 945, 975].map((x, i) =>
        [294, 355, 422, 484].map((y, j) => (
          <rect key={`${i}${j}`} x={x} y={y - i * 2} width={i === 0 ? 23 : 21} height={j === 3 ? 95 : 52} fill="#565656" />
        ))
      )}
      <Cells q={[[876, 490], [945, 488], [953, 618], [880, 615]]} nu={3} nv={4} base={100} edge="#484848" vary={7} seed={22} />
      <Cells q={[[854, 518], [980, 520], [980, 590], [854, 572]]} nu={4} nv={2} base={98} edge="#484848" vary={7} seed={23} />
      <Cells q={[[846, 568], [880, 572], [872, 604], [846, 604]]} nu={1} nv={1} base={96} edge="#484848" seed={24} />
      <Cells q={[[824, 600], [862, 602], [862, 668], [824, 666]]} nu={1} nv={2} base={98} edge="#484848" seed={25} />

      {/* left mirror */}
      <R d={[[110, 404, 47, 42, "#4a5c66"]]} />
      <Cells q={[[66, 484], [112, 480], [112, 535], [66, 535]]} nu={2} nv={2} base={108} edge="#5c5c5c" seed={26} />
      <Cells q={[[88, 456], [112, 456], [112, 590], [98, 570]]} nu={1} nv={5} base={106} edge="#5c5c5c" seed={27} />

      {/* wipers and lamps */}
      <R
        d={[
          [207, 618, 30, 25, "#a6a79c"], [237, 618, 54, 26, "#6c6f62"], [498, 634, 60, 30, "#65685a"], [558, 636, 30, 30, "#98998c"],
          [94, 746, 30, 34, "#4a4943"], [126, 726, 24, 34, "#8f918a"], [126, 758, 28, 64, "#8b9a9c"], [150, 740, 42, 20, "#b7c2cc"], [154, 758, 40, 34, "#c9c8bd"], [96, 780, 30, 32, "#a2a292"], [154, 792, 40, 32, "#b4b49f"], [98, 812, 34, 30, "#dcdbc4"], [150, 824, 30, 26, "#dddcc8"],
          [254, 760, 54, 62, "#a8b1b9"], [308, 762, 54, 68, "#b7c5d3"], [362, 768, 70, 64, "#a6afb8"], [308, 832, 70, 62, "#c7cfd8"],
          [534, 768, 30, 26, "#b4c3cf"], [552, 760, 28, 34, "#bdbcb3"], [578, 760, 44, 34, "#55524a"], [524, 792, 54, 30, "#c2c0b6"], [578, 792, 46, 66, "#7f9195"], [526, 822, 52, 32, "#8e8d7d"], [624, 772, 60, 40, "#b5c3ce"], [654, 790, 42, 34, "#78786a"], [628, 792, 28, 64, "#d6d5c8"], [654, 824, 42, 34, "#b9b7a2"], [624, 858, 70, 30, "#dcdbc0"], [552, 860, 28, 26, "#d9d8c2"],
          [650, 892, 34, 70, "#c4cfd9"],
        ]}
      />

      {/* front right wheel */}
      <Cells q={[[718, 1040], [850, 1010], [862, 1150], [755, 1140]]} nu={6} nv={6} base={104} edge="#505050" seed={28} />
      <Cells q={[[843, 885], [940, 860], [940, 1120], [860, 1150]]} nu={7} nv={15} base={88} edge="#454545" vary={6} seed={29} />
      <Cells q={[[938, 865], [963, 905], [963, 1045], [938, 1120]]} nu={2} nv={12} base={88} edge="#454545" vary={6} seed={30} />

      {/* bumper */}
      <path d="M212 868L222 905L290 908V932L212 925zM452 925L495 922L500 895L530 892V960L452 950z" fill="#4c4c4c" />
      <Cells q={[[85, 905], [270, 935], [270, 975], [88, 965]]} nu={7} nv={1} base={142} edge="#7a7a7a" vary={14} seed={31} />
      <Cells q={[[108, 962], [275, 982], [275, 1025], [115, 1005]]} nu={6} nv={1} base={84} edge="#484848" vary={30} seed={32} />
      <Cells q={[[442, 952], [830, 965], [830, 1000], [442, 990]]} nu={11} nv={1} base={146} edge="#7c7c7c" vary={16} seed={33} />
      <Cells q={[[442, 990], [840, 995], [820, 1030], [442, 1026]]} nu={12} nv={1} base={116} edge="#575757" vary={55} seed={34} />
      <Cells q={[[442, 1024], [782, 1030], [765, 1062], [442, 1052]]} nu={10} nv={1} base={66} edge="#333" vary={9} seed={35} />

      {/* number plate */}
      <Cells q={[[268, 935], [442, 940], [442, 1012], [268, 1003]]} nu={6} nv={2} base={214} vary={6} edge="#c4c4cc" tint={[-4, 0, 8]} seed={36} />
      <R d={[[290, 972, 30, 32, "#263c4a"], [320, 976, 26, 30, "#d2b6c2"], [346, 978, 26, 30, "#d78084"], [266, 1002, 26, 32, "#5b97dc"], [292, 1004, 28, 32, "#84b4e6"], [320, 1006, 52, 34, "#6aa0e0"], [372, 982, 70, 62, "#bdd0e0"]]} />
      <Cells q={[[268, 1034], [442, 1044], [442, 1082], [268, 1066]]} nu={6} nv={1} base={182} vary={5} edge="#a5a0b0" tint={[2, -4, 12]} seed={37} />

      {/* manipulator */}
      <path d="M0 454L256 428" stroke="#1616d8" strokeWidth="3.500" />
      <path d="M341 427L1235 460" stroke="#f01414" strokeWidth="3.500" />
      <path d="M1230 443L1262 458V464L1230 476z" fill="#f00000" />
      <rect x="263" y="394" width="60" height="60" fill="none" stroke="#5fc4dc" strokeWidth="3.500" />
      <circle cx="292" cy="424" r="2" fill="#5fc4dc" />
    </g>
  );
}

function Scene() {
  return (
    <svg className="block" width="836" height="941" viewBox="1085 66 836 941">
      <Truck />
      <path d="M1487 532.500L1500 531.300" stroke="#1616d8" strokeWidth="1.200" />
      <path d="M1590.300 160L1596.500 502" stroke="#e6e67a" strokeWidth="1.400" />
      <path d="M1590 143L1595.500 165H1585.500z" fill="#ffff66" />
      <path d="M1818 234.500l16 -1.300v17.500l-16 1.500z" fill="#667be0" stroke="#3d3de8" />
    </svg>
  );
}

/* ------------------------------------------------------------------ */
/* Page                                                                */
/* ------------------------------------------------------------------ */

function ViewPanel({ wide = false, width }: { wide?: boolean; width: string }) {
  return (
    <div className={`relative mt-[3px] flex shrink-0 flex-col border-t border-l border-[#808080] ${width}`}>
      <div className="overflow-hidden">
        <ViewBar wide={wide} />
      </div>
      <div className="flex-1 overflow-hidden bg-[linear-gradient(180deg,#899eb7_0%,#778ca3_23%,#6d8299_34%,#566a80_55%,#43536a_75%,#343d4b_88%,#1e242c_100%)]">
        {wide && <Scene />}
      </div>
      <RenameWizard active={!wide} />
    </div>
  );
}

export default function App() {
  return (
    <div className="relative h-[1080px] w-[1920px] overflow-hidden bg-[#373737] font-['Open_Sans',sans-serif]">
      <div className="flex h-[1007px]">
        <div className="flex w-[757px] shrink-0 flex-col pt-6">
          <div className="h-[4px] bg-[#424242]" />
          <div className="flex min-h-0 flex-1 bg-[#3c3c3c]">
            <div className="-ml-[12px] mr-[5px] flex">
              <Outliner />
            </div>
            <ViewPanel width="w-[407px]" />
            <div className="-mt-[1px] flex">
              <ToolBox />
            </div>
          </div>
        </div>
        <div className="flex w-[1163px] pt-6">
          <div className="flex min-h-0 flex-1 bg-[#3c3c3c] pl-[4px]">
            <Outliner hot />
            <div className="w-[4.500px] shrink-0" />
            <ViewPanel wide width="w-[836.500px]" />
          </div>
        </div>
      </div>

      {/* highlight around the Outliner button */}
      <div className="absolute top-[768px] left-[325px] h-[63px] w-[136px] rounded-[6px] border-[5px] border-[#ff6600] bg-white/15" />

      {/* step arrows */}
      <svg className="absolute top-[700px] left-[655px]" width="110" height="54" fill="#fff">
        {[0, 34.800, 69.500].map((x) => (
          <path key={x} transform={`translate(${x} 0)`} d="M2 10l8 -7.500L36 27L10.500 51.500L3 43.500L20 28z" />
        ))}
      </svg>

      <div className="absolute top-[975px] left-[222px] origin-left scale-x-[0.637] whitespace-nowrap [font-family:'Liberation_Sans',Arial,sans-serif] text-[70px] leading-[78px] font-bold tracking-[9.300px] text-white [-webkit-text-stroke:1.200px_white]">
        Quick select from List to outliner / outliner to List
      </div>
    </div>
  );
}
